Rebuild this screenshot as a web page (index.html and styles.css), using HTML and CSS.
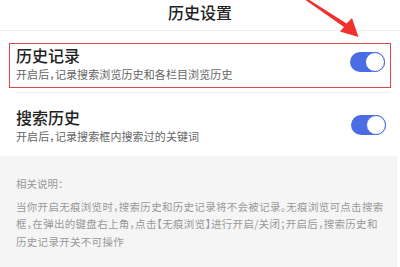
FILE: index.html
```html
<!DOCTYPE html>
<html lang="zh-CN">
<head>
<meta charset="utf-8">
<title>历史设置</title>
<link rel="stylesheet" href="styles.css">
</head>
<body>
<div class="page">
  <header class="header">历史设置</header>
  <div class="row-wrap highlighted">
    <div class="row">
      <div class="texts">
        <div class="title">历史记录</div>
        <div class="desc">开启后，记录搜索浏览历史和各栏目浏览历史</div>
      </div>
      <div class="toggle"><span class="knob"></span></div>
    </div>
  </div>
  <div class="divider"></div>
  <div class="row row2">
    <div class="texts">
      <div class="title">搜索历史</div>
      <div class="desc">开启后，记录搜索框内搜索过的关键词</div>
    </div>
    <div class="toggle"><span class="knob"></span></div>
  </div>
  <section class="notes">
    <div class="notes-label">相关说明：</div>
    <p class="notes-text">当你开启无痕浏览时，搜索历史和历史记录将不会被记录。无痕浏览可点击搜索<br>框，在弹出的键盘右上角，点击【无痕浏览】进行开启/关闭；开启后，搜索历史和<br>历史记录开关不可操作</p>
  </section>
  <svg class="arrow" width="400" height="50" viewBox="0 0 400 50">
    <polygon points="305.5,0 309.5,0 346.5,23.5 352,18 358.5,37 340,31.5 344,27" fill="#f0302c"/>
  </svg>
</div>
</body>
</html>
```

FILE: styles.css
```css
html, body {
  margin: 0;
  padding: 0;
  background: #ffffff;
}
.page {
  position: relative;
  width: 400px;
  height: 267px;
  overflow: hidden;
  font-family: "Noto Sans CJK SC", "Noto Sans", sans-serif;
  color: #222;
}
.header {
  height: 30px;
  line-height: 24px;
  text-align: center;
  font-size: 16px;
  font-weight: 500;
  color: #222;
  border-bottom: 1px solid #eeeeee;
}
.row-wrap {
  margin: 12px 9px 0 9px;
}
.highlighted {
  border: 1px solid #e0474a;
}
.row {
  display: flex;
  justify-content: space-between;
  align-items: flex-start;
  padding: 0 5px 5px 6px;
}
.title {
  font-size: 16px;
  line-height: 22px;
  font-weight: 500;
  color: #222;
}
.desc {
  font-size: 11px;
  line-height: 16px;
  color: #666;
  font-feature-settings: "halt" 1;
  letter-spacing: 0.1px;
}
.toggle {
  position: relative;
  width: 35px;
  height: 20px;
  border-radius: 10px;
  background: #4a6de6;
  margin-top: 8px;
}
.knob {
  position: absolute;
  right: 0;
  top: 0;
  width: 18px;
  height: 18px;
  border-radius: 50%;
  background: #ffffff;
  border: 1px solid #4a6de6;
}
.divider {
  height: 1px;
  background: #eeeeee;
  margin: 4px 10px 0 16px;
}
.row2 {
  padding: 13px 14px 12px 16px;
}
.row2 .toggle {
  margin-top: 9px;
}
.notes {
  background: #f5f5f5;
  margin-right: 3px;
  padding: 19px 8px 17px 16px;
  color: #999;
}
.notes-label {
  font-size: 10.5px;
  line-height: 17.5px;
}
.notes-text {
  margin: 5px 0 0 0;
  font-size: 10.5px;
  line-height: 17.5px;
  font-feature-settings: "halt" 1;
  letter-spacing: 0.3px;
  white-space: nowrap;
}
.arrow {
  position: absolute;
  left: 0;
  top: 0;
}
```
